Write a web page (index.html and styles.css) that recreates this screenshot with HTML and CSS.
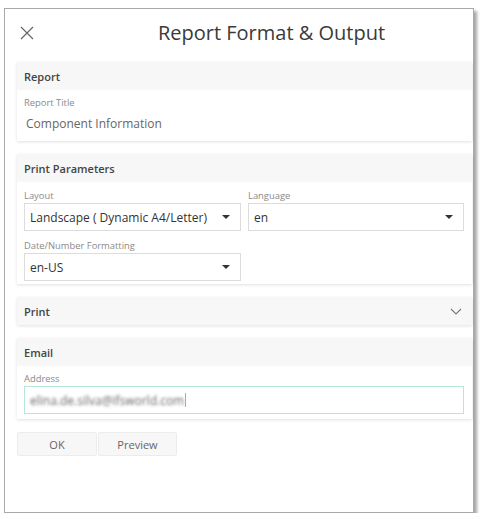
FILE: index.html
```html
<!DOCTYPE html>
<html>
<head>
<meta charset="utf-8">
<link rel="stylesheet" href="styles.css">
</head>
<body>
<div class="dialog">
  <div class="dlg-header">
    <button class="close-btn" aria-label="Close">
      <svg width="14" height="14" viewBox="0 0 14 14"><path d="M1 1L13 13M13 1L1 13" stroke="#666" stroke-width="1.2" fill="none"/></svg>
    </button>
    <div class="dlg-title">Report Format &amp; Output</div>
  </div>

  <div class="section">
    <div class="sec-head">Report</div>
    <div class="sec-body report-body">
      <div class="label">Report Title</div>
      <div class="value">Component Information</div>
    </div>
  </div>

  <div class="section">
    <div class="sec-head">Print Parameters</div>
    <div class="sec-body params">
      <div class="field">
        <div class="label">Layout</div>
        <div class="select"><span>Landscape ( Dynamic A4/Letter)</span><i class="caret"></i></div>
      </div>
      <div class="field">
        <div class="label">Language</div>
        <div class="select"><span>en</span><i class="caret"></i></div>
      </div>
      <div class="field">
        <div class="label">Date/Number Formatting</div>
        <div class="select"><span>en-US</span><i class="caret"></i></div>
      </div>
    </div>
  </div>

  <div class="section">
    <div class="sec-head collapsible">
      <span>Print</span>
      <svg width="12" height="7" viewBox="0 0 12 7"><path d="M1 1L6 6L11 1" stroke="#777" stroke-width="1.1" fill="none"/></svg>
    </div>
  </div>

  <div class="section">
    <div class="sec-head">Email</div>
    <div class="sec-body email-body">
      <div class="label">Address</div>
      <div class="input"><span class="blurred">elina.de.silva@ifsworld.com</span><span class="cursor"></span></div>
    </div>
  </div>

  <div class="buttons">
    <button class="btn">OK</button>
    <button class="btn">Preview</button>
  </div>
</div>
</body>
</html>
```

FILE: styles.css
```css
* { box-sizing: border-box; }
html, body { margin: 0; padding: 0; background: #fff; }
body { font-family: "Open Sans", "Noto Sans", sans-serif; color: #444; }

.dialog {
  margin: 8px 0 0 4px;
  width: 470px;
  height: 505px;
  border: 1px solid #a9a9a9;
  background: #fff;
  box-shadow: 3px 3px 3px rgba(0,0,0,0.35);
  padding: 0 1px 0 12px;
}

.dlg-header {
  display: flex;
  align-items: center;
  height: 53px;
  padding-bottom: 6px;
}
.close-btn {
  width: 54px;
  height: 30px;
  border: 0;
  background: none;
  padding: 0 0 0 3px;
  margin: 0;
  display: flex;
  align-items: center;
  justify-content: flex-start;
}
.dlg-title {
  flex: 1;
  text-align: center;
  font-size: 20px;
  color: #3a3a3a;
}

.section {
  background: #fff;
  box-shadow: 0 1px 3px rgba(0,0,0,0.12);
  margin-bottom: 13px;
}
.sec-head {
  height: 28px;
  background: #f7f7f7;
  padding: 0 7px;
  display: flex;
  align-items: center;
  font-size: 11px;
  font-weight: 600;
  color: #444;
}
.sec-head.collapsible { justify-content: space-between; padding-right: 10px; }

.sec-body { padding: 5px 8px 6px 7px; }
.label {
  font-size: 9.4px;
  color: #8a8a8a;
  line-height: 13px;
}
.report-body { padding-top: 6px; padding-bottom: 8px; }
.report-body .value {
  font-size: 12px;
  color: #666;
  padding-left: 2px;
  margin-top: 6px;
  line-height: 18px;
}

.params {
  display: grid;
  grid-template-columns: 217px 216px;
  column-gap: 7px;
  row-gap: 8px;
  padding-top: 7px;
  padding-bottom: 3px;
}
.field .label { margin-bottom: 1px; }
.select {
  height: 28px;
  border: 1px solid #dcdcdc;
  display: flex;
  align-items: center;
  justify-content: space-between;
  padding: 0 10px 0 5px;
  font-size: 12px;
  color: #333;
}
.caret {
  width: 0;
  height: 0;
  border-left: 4px solid transparent;
  border-right: 4px solid transparent;
  border-top: 4px solid #333;
}

.email-body { padding-top: 6px; padding-bottom: 5px; }
.input {
  margin-top: 1px;
  height: 28px;
  border: 1px solid #b7e8d4;
  display: flex;
  align-items: center;
  padding: 0 5px;
  font-size: 12px;
}
.blurred {
  color: transparent;
  text-shadow: 0 0 3px rgba(90,90,90,0.9);
}
.cursor { display: inline-block; width: 1px; height: 14px; background: #aaa; margin-left: 1px; }

.buttons {
  display: flex;
  gap: 1px;
  margin-top: 1px;
}
.btn {
  font-family: inherit;
  width: 80px;
  height: 24px;
  background: #f7f7f7;
  border: 1px solid #ececec;
  border-radius: 2px;
  font-size: 11px;
  color: #666;
  padding: 0;
}
.btn + .btn { width: 79px; }
```
